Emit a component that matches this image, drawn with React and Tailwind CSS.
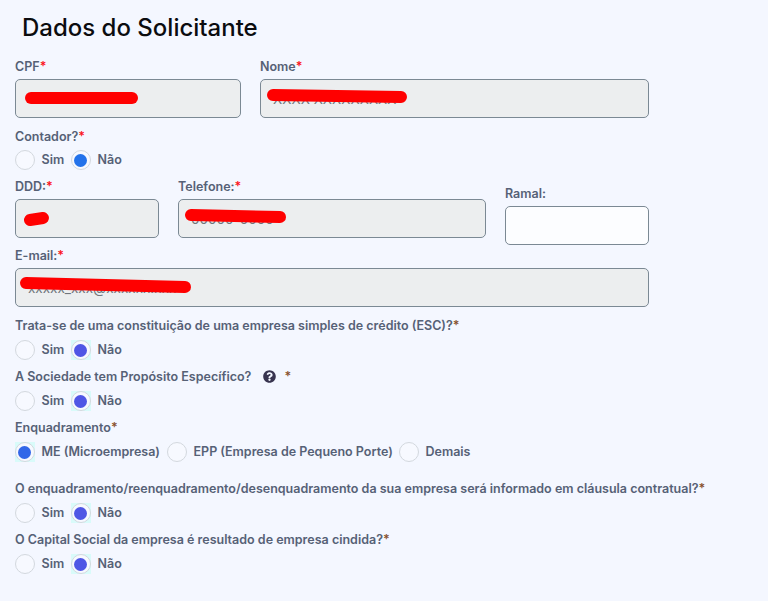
import React from 'react'
import { FaQuestionCircle } from 'react-icons/fa'

function Label({ children, required, star = 'text-[#fb1020]', className = '' }) {
  return (
    <div className={`flex h-5 items-center whitespace-nowrap pt-0.5 text-[12.5px] font-semibold leading-5 text-[#566176] ${className}`}>
      {children}
      {required && <span className={star}>*</span>}
    </div>
  )
}

// campo somente leitura, com o valor riscado em vermelho
function Field({ value, stroke, className = 'bg-[#eceeef]' }) {
  return (
    <div className={`relative mt-[3px] flex h-[38.5px] items-center overflow-hidden rounded-[5px] border border-[#7b8994] pl-3 pt-px text-[13.5px] text-[#70767c] ${className}`}>
      {value}
      {stroke && (
        <svg className="absolute left-0 top-0 h-full w-full">
          <line x1={stroke[0]} y1={stroke[1]} x2={stroke[2]} y2={stroke[3]} stroke="#ff0000" strokeWidth="12" strokeLinecap="round" />
        </svg>
      )}
    </div>
  )
}

function Radio({ label, checked, tone = 'bg-[#4f56e5]', glow = 'bg-[#d9fbfa]', width }) {
  return (
    <div className={`flex h-5 shrink-0 items-center ${width}`}>
      <span className={`mr-[6.5px] flex size-5 shrink-0 items-center justify-center ${checked ? glow : ''}`}>
        <span className="flex size-5 rounded-full border border-[#d3d8de] bg-[#f7f9ff] pl-0.5 pt-[3px]">
          {checked && <span className={`size-[13px] rounded-full ${tone}`} />}
        </span>
      </span>
      <span className="whitespace-nowrap text-[12.5px] font-semibold leading-5 text-[#566176]">{label}</span>
    </div>
  )
}

function YesNo({ tone, glow, className = 'mt-[5px]' }) {
  return (
    <div className={`flex ${className}`}>
      <Radio label="Sim" width="w-14" />
      <Radio label="Não" width="w-20" checked tone={tone} glow={glow} />
    </div>
  )
}

const darkStar = 'text-[#87502c]'

export default function App() {
  return (
    <div className="h-[601px] w-[768px] overflow-hidden bg-[#f4f7ff] pl-[15px] font-['Inter',sans-serif]">
      <h1 className="flex h-14 items-center pl-[7px] text-[24px] font-medium text-[#0b0c0f]">Dados do Solicitante</h1>

      <div className="flex h-[62px] gap-[19.5px]">
        <div className="w-[225.5px]">
          <Label required>CPF</Label>
          <Field stroke={[15, 18, 116, 18]} />
        </div>
        <div className="w-[388.5px]">
          <Label required>Nome</Label>
          <Field value="XXXX XXXXXXXXX" stroke={[12, 15, 140, 17]} />
        </div>
      </div>

      <Label required className="mt-2">Contador?</Label>
      <YesNo className="mt-1" tone="bg-[#2372ea]" glow="" />

      <div className="mt-1.5 flex h-[69px] gap-[19.5px]">
        <div className="w-[143.5px]">
          <Label required>DDD:</Label>
          <Field stroke={[14, 20, 27, 18]} />
        </div>
        <div className="w-[307.5px]">
          <Label required>Telefone:</Label>
          <Field value="00000-0000" stroke={[12, 15, 101, 17]} />
        </div>
        <div className="w-[143.5px] pt-[7px]">
          <Label>Ramal:</Label>
          <Field className="bg-[#fcfdff]" />
        </div>
      </div>

      <Label required>E-mail:</Label>
      <div className="h-[39px] w-[633.5px]">
        <Field value="xxxxx_xxx@xxxxxx.xxx" stroke={[10, 14, 169, 18]} />
      </div>

      <Label required star={darkStar} className="mt-2">Trata-se de uma constituição de uma empresa simples de crédito (ESC)?</Label>
      <YesNo />

      <Label required star={darkStar} className="mt-1.5">
        A Sociedade tem Propósito Específico?
        <FaQuestionCircle className="-mt-0.5 ml-3 mr-2 size-[13px] text-[#38344f]" />
      </Label>
      <YesNo />

      <Label required star={darkStar} className="mt-1.5">Enquadramento</Label>
      <div className="mt-[5px] flex">
        <Radio label="ME (Microempresa)" width="w-[152px]" checked tone="bg-[#3267e8]" />
        <Radio label="EPP (Empresa de Pequeno Porte)" width="w-[232px]" />
        <Radio label="Demais" width="w-20" />
      </div>

      <Label required star={darkStar} className="mt-4">
        O enquadramento/reenquadramento/desenquadramento da sua empresa será informado em cláusula contratual?
      </Label>
      <YesNo />

      <Label required star={darkStar} className="mt-1.5">O Capital Social da empresa é resultado de empresa cindida?</Label>
      <YesNo />
    </div>
  )
}
